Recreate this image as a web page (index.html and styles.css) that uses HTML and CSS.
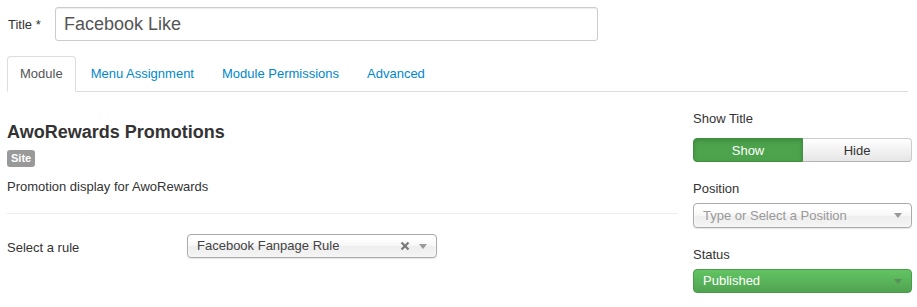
FILE: index.html
```html
<!DOCTYPE html>
<html>
<head>
<meta charset="utf-8">
<link rel="stylesheet" href="styles.css">
</head>
<body>
<div class="page">
  <div class="title-row">
    <label class="title-label">Title *</label>
    <input class="title-input" type="text" value="Facebook Like">
  </div>
  <ul class="tabs">
    <li class="tab active">Module</li>
    <li class="tab">Menu Assignment</li>
    <li class="tab">Module Permissions</li>
    <li class="tab">Advanced</li>
  </ul>
  <div class="main">
    <div class="left">
      <h4 class="heading">AwoRewards Promotions</h4>
      <span class="badge">Site</span>
      <p class="desc">Promotion display for AwoRewards</p>
      <hr class="sep">
      <div class="field-row">
        <label class="field-label">Select a rule</label>
        <div class="chosen rule">
          <span class="chosen-text">Facebook Fanpage Rule</span>
          <svg class="chosen-x" width="10" height="10" viewBox="0 0 10 10"><path d="M1.5 1.5 L8.5 8.5 M8.5 1.5 L1.5 8.5" stroke="#7a7a7a" stroke-width="2.2" fill="none"/></svg>
          <span class="chosen-arrow"></span>
        </div>
      </div>
    </div>
    <div class="right">
      <div class="r-label">Show Title</div>
      <div class="btn-group">
        <span class="btn btn-show">Show</span>
        <span class="btn btn-hide">Hide</span>
      </div>
      <div class="r-label r-gap">Position</div>
      <div class="chosen pos">
        <span class="chosen-text placeholder">Type or Select a Position</span>
        <span class="chosen-arrow"></span>
      </div>
      <div class="r-label r-gap">Status</div>
      <div class="chosen status">
        <span class="chosen-text">Published</span>
        <span class="chosen-arrow dark"></span>
      </div>
    </div>
  </div>
</div>
</body>
</html>
```

FILE: styles.css
```css
* { box-sizing: border-box; }
body {
  margin: 0;
  font-family: "Liberation Sans", Arial, sans-serif;
  font-size: 13px;
  color: #333;
  background: #fff;
}
.page { padding-top: 7px; }
.title-row {
  display: flex;
  align-items: center;
  padding-left: 8px;
}
.title-label {
  width: 47px;
  font-size: 13px;
  color: #333;
}
.title-input {
  width: 543px;
  height: 34px;
  margin: 0;
  padding: 0 8px;
  font-family: "Liberation Sans", Arial, sans-serif;
  font-size: 18px;
  color: #555;
  border: 1px solid #ccc;
  border-radius: 3px;
  box-shadow: inset 0 1px 1px rgba(0,0,0,.075);
  outline: none;
}
.tabs {
  list-style: none;
  display: flex;
  margin: 15px 0 0 7px;
  padding: 0;
  width: 901px;
  border-bottom: 1px solid #ddd;
}
.tab {
  padding: 0 12px;
  height: 35px;
  line-height: 34px;
  margin-right: 2px;
  margin-bottom: -1px;
  color: #0088cc;
  border: 1px solid transparent;
  border-radius: 4px 4px 0 0;
}
.tab.active {
  color: #555;
  background: #fff;
  border-color: #ddd #ddd transparent;
  height: 36px;
}
.main {
  display: flex;
  padding-left: 7px;
  margin-top: 18px;
  gap: 15px;
}
.left { width: 671px; }
.heading {
  margin: 12px 0 0;
  font-size: 18px;
  line-height: 20px;
  font-weight: bold;
  color: #333;
}
.badge {
  display: inline-block;
  margin-top: 8px;
  padding: 2px 4px;
  font-size: 11px;
  line-height: 13px;
  font-weight: bold;
  color: #fff;
  background: #999;
  border-radius: 3px;
}
.desc {
  margin: 11px 0 0;
  line-height: 18px;
}
.sep {
  margin: 17px 0 0;
  border: 0;
  border-top: 1px solid #eee;
  height: 0;
}
.field-row {
  display: flex;
  align-items: center;
  margin-top: 20px;
}
.field-label { width: 180px; padding-top: 2px; }
.chosen {
  position: relative;
  display: flex;
  align-items: center;
  height: 24px;
  padding-left: 9px;
  border: 1px solid #aaa;
  border-radius: 4px;
  background: linear-gradient(#fff 20%, #f6f6f6 50%, #eee 52%, #f4f4f4 100%);
  box-shadow: inset 0 0 3px #fff, 0 1px 1px rgba(0,0,0,.1);
  color: #444;
}
.chosen-text { flex: 1; line-height: 24px; }
.placeholder { color: #999; }
.rule { width: 250px; }
.chosen-x {
  margin-right: 9px;
}
.chosen-arrow {
  width: 0;
  height: 0;
  border-left: 4px solid transparent;
  border-right: 4px solid transparent;
  border-top: 5px solid #999;
  margin-right: 9px;
}
.right { width: 219px; }
.r-label { line-height: 18px; color: #333; }
.r-gap { margin-top: 18px; }
.btn-group {
  display: flex;
  margin-top: 10px;
  height: 24px;
}
.btn {
  display: flex;
  align-items: center;
  justify-content: center;
  font-size: 13px;
  height: 24px;
}
.btn-show {
  width: 110px;
  color: #fff;
  background: #4ca34c;
  border: 1px solid #3f8f3f;
  border-radius: 4px 0 0 4px;
  box-shadow: inset 0 2px 4px rgba(0,0,0,.15);
}
.btn-hide {
  flex: 1;
  color: #333;
  background: linear-gradient(#fff, #e6e6e6);
  border: 1px solid #ccc;
  border-left: 0;
  border-bottom-color: #b3b3b3;
  border-radius: 0 4px 4px 0;
}
.pos { margin-top: 5px; height: 25px; }
.status {
  margin-top: 5px;
  color: #fff;
  background: linear-gradient(#62c462, #51a351);
  border-color: #4a9a4a;
  box-shadow: none;
}
.chosen-arrow.dark { border-top-color: #5a8f5a; }
```
